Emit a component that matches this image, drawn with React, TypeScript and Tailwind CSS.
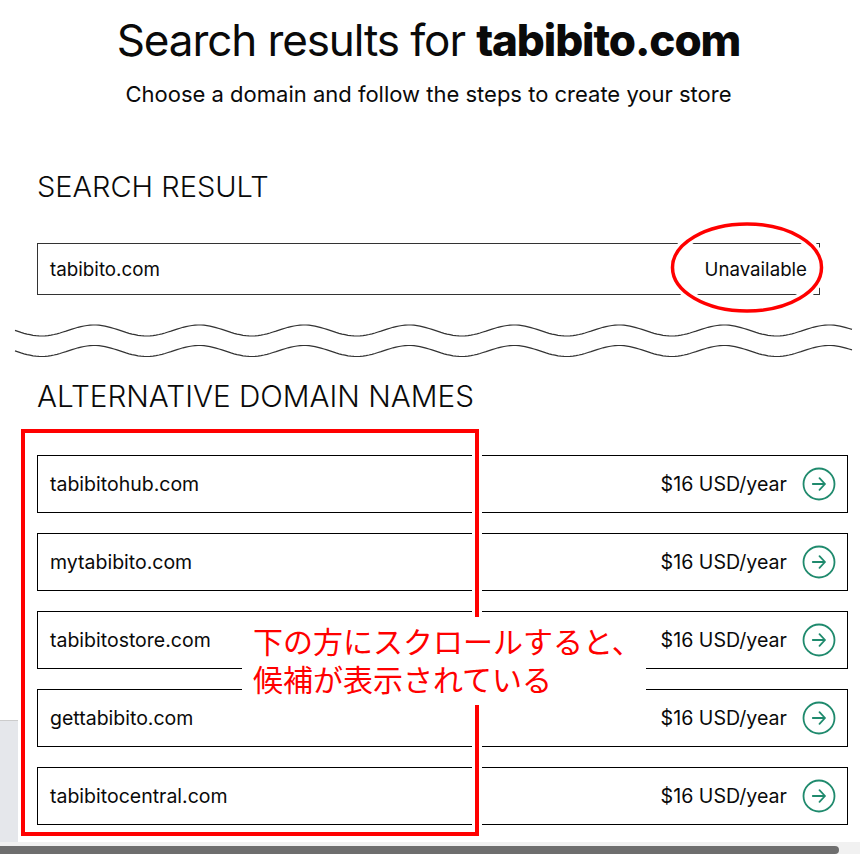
const domains = [
  "tabibitohub.com",
  "mytabibito.com",
  "tabibitostore.com",
  "gettabibito.com",
  "tabibitocentral.com",
];

function wavePath(baseY: number) {
  const points: string[] = [];
  for (let x = 15; x <= 852; x += 3) {
    const y = baseY + 5.5 * Math.cos(((x - 94) / 105) * 2 * Math.PI) * -1;
    points.push(`${x} ${y.toFixed(1)}`);
  }
  return "M" + points.join("L");
}

function ArrowCircle() {
  return (
    <svg width="34" height="34" viewBox="0 0 34 34" fill="none" stroke="#1f8a6d" className="shrink-0">
      <circle cx="17" cy="17" r="15.5" strokeWidth="1.8" />
      <path d="M10.8 17H23M17.5 11.2L23 17L17.5 22.8" strokeWidth="1.8" strokeLinecap="round" strokeLinejoin="round" />
    </svg>
  );
}

function DomainRow({ name }: { name: string }) {
  return (
    <div className="flex h-[58px] items-center justify-between border border-black pl-3 pr-[11px]">
      <span className="mt-[2px] text-[19.5px]">{name}</span>
      <div className="flex items-center gap-[15px]">
        <span className="mt-[2px] text-[19.6px]">$16 USD/year</span>
        <ArrowCircle />
      </div>
    </div>
  );
}

export default function App() {
  return (
    <div className="relative h-[854px] w-[860px] overflow-hidden bg-white font-['Inter',sans-serif] text-[#0a0a0a]">
      <div className="pl-[37px] pr-[12px]">
        <div className="pr-[28px] text-center">
          <h1 className="pt-[13px] text-[44px] leading-[54px] tracking-[-1.1px]">
            Search results for <span className="font-extrabold">tabibito.com</span>
          </h1>
          <p className="mt-[13px] text-[22px] leading-[28px]">Choose a domain and follow the steps to create your store</p>
        </div>

        <h2 className="mt-[62px] text-[29px] font-light leading-[34px]">SEARCH RESULT</h2>
        <div className="mt-[39px] mr-[28px] flex h-[52px] items-center justify-between border border-[#333] px-3">
          <span className="mt-[2px] text-[18.8px]">tabibito.com</span>
          <span className="mt-[2px] text-[18.7px]">Unavailable</span>
        </div>

        <h2 className="mt-[84px] text-[29.7px] font-light leading-[34px]">ALTERNATIVE DOMAIN NAMES</h2>
        <div className="mt-[42px] flex flex-col gap-[20px]">
          {domains.map((d) => (
            <DomainRow key={d} name={d} />
          ))}
        </div>
      </div>

      {/* annotations drawn over the screenshot */}
      <svg width="860" height="854" className="absolute left-0 top-0" fill="none">
        <path d={wavePath(330.5)} stroke="#333" strokeWidth="1.2" />
        <path d={wavePath(351)} stroke="#333" strokeWidth="1.2" />
        <ellipse cx="747" cy="267.5" rx="74.5" ry="43.5" stroke="#fff" strokeWidth="10" />
        <ellipse cx="747" cy="267.5" rx="74.5" ry="43.5" stroke="#f00" strokeWidth="3.5" />
      </svg>

      <div className="absolute left-0 top-[720px] h-[122px] w-[18px] border-t border-[#ccc] bg-[#e5e7eb]" />
      <div className="absolute left-[21px] top-[429px] h-[407px] w-[458px] border-4 border-[#f00] shadow-[0_0_0_3px_#fff,inset_0_0_0_3px_#fff]" />

      <div className="absolute left-[242px] top-[617px] h-[88px] w-[404px] bg-white pl-[11px] pt-[4px] font-['Noto_Sans_CJK_JP',sans-serif] text-[30px] leading-[38px] text-[#f00]">
        <p>下の方にスクロールすると、</p>
        <p>候補が表示されている</p>
      </div>

      <div className="absolute bottom-0 left-0 h-[12px] w-full bg-[#f1f1f1]" />
      <div className="absolute bottom-0 left-0 h-[8px] w-[839px] rounded-r-[4px] bg-[#6e6e6e]" />
    </div>
  );
}
